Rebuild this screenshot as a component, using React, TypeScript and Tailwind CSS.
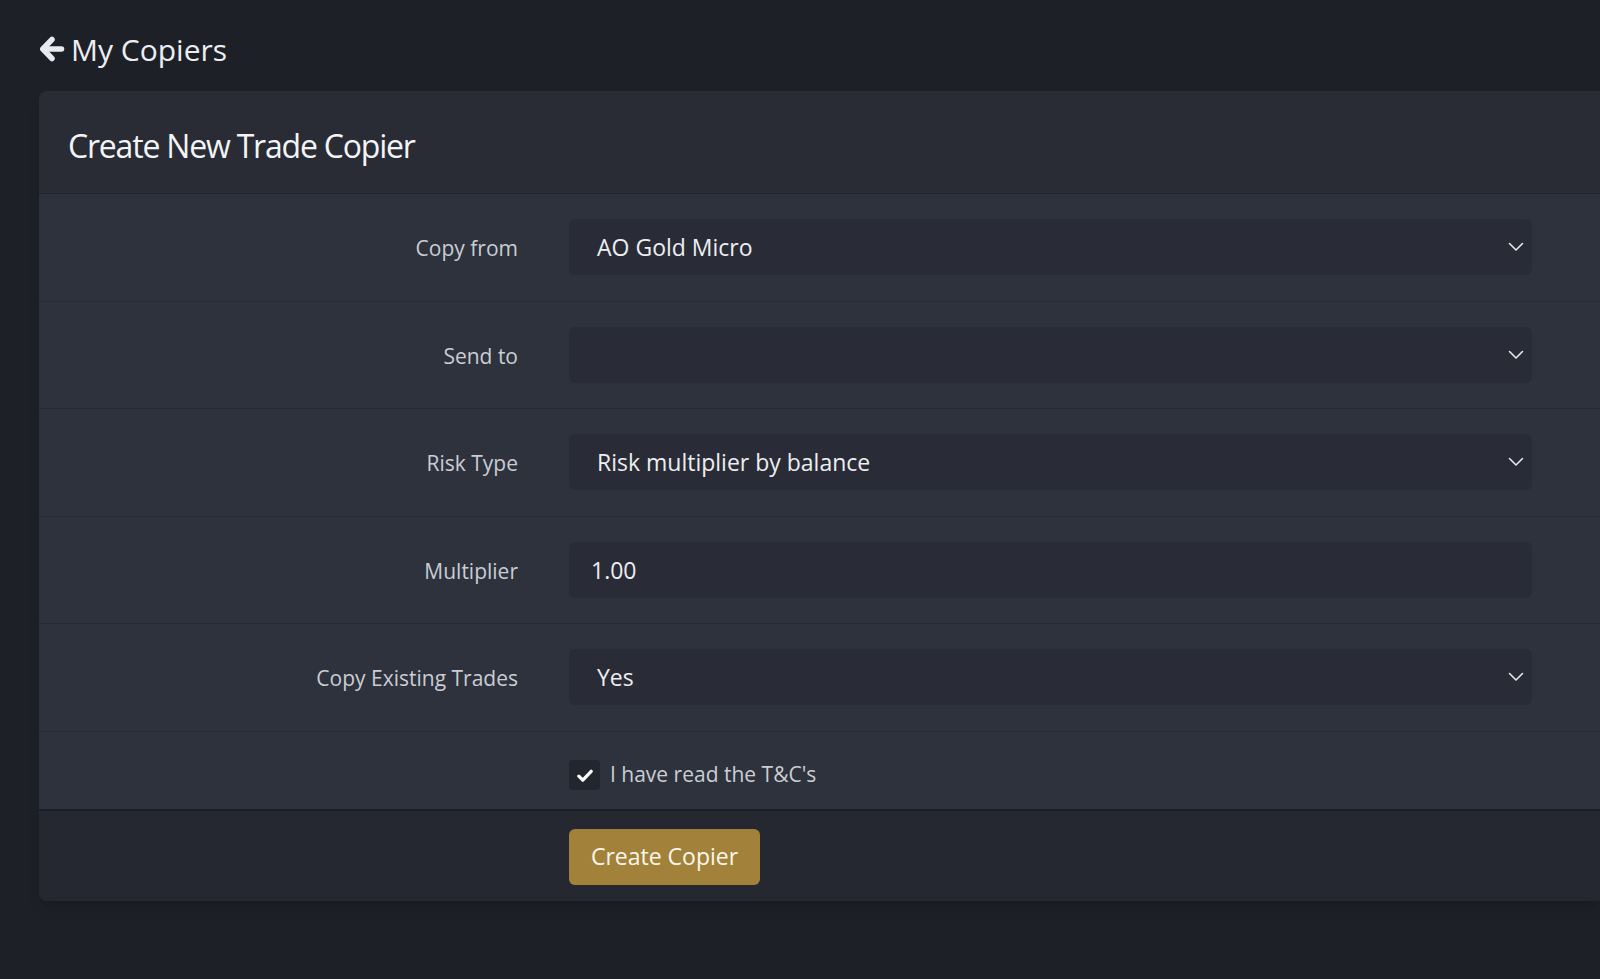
import { useState } from 'react'

interface Field {
  label: string
  value: string
  kind: 'select' | 'input'
}

function ChevronDown() {
  return (
    <svg width="16" height="10" viewBox="0 0 16 10" fill="none">
      <path d="M1.5 1.5L8 8L14.5 1.5" stroke="#e6e8ec" strokeWidth="1.6" strokeLinecap="round" strokeLinejoin="round" />
    </svg>
  )
}

function ArrowLeft() {
  return (
    <svg width="26" height="26" viewBox="0 0 26 26" fill="none">
      <path d="M13 3.5L3.8 13L13 22.5" stroke="#e8eaee" strokeWidth="5.5" strokeLinecap="round" strokeLinejoin="round" />
      <path d="M4.5 13H22.5" stroke="#e8eaee" strokeWidth="5.5" strokeLinecap="round" />
    </svg>
  )
}

function Check() {
  return (
    <svg width="16" height="13" viewBox="0 0 16 13">
      <path d="M1.8 7.2l4 4L14.2 2.3" stroke="#ffffff" strokeWidth="3.2" fill="none" strokeLinecap="round" strokeLinejoin="round" />
    </svg>
  )
}

export default function App() {
  const [agreed, setAgreed] = useState(true)

  const fields: Field[] = [
    { label: 'Copy from', value: 'AO Gold Micro', kind: 'select' },
    { label: 'Send to', value: '', kind: 'select' },
    { label: 'Risk Type', value: 'Risk multiplier by balance', kind: 'select' },
    { label: 'Multiplier', value: '1.00', kind: 'input' },
    { label: 'Copy Existing Trades', value: 'Yes', kind: 'select' },
  ]

  return (
    <div className="min-h-screen bg-[#1e2028] font-['Open_Sans',sans-serif] overflow-hidden">
      {/* Back link */}
      <div className="pt-[29px] pl-[39px]">
        <a className="inline-flex items-center gap-[6px] h-[40px] text-[30px] text-[#eceef2] cursor-pointer">
          <ArrowLeft />
          <span>My Copiers</span>
        </a>
      </div>

      {/* Card */}
      <div className="mt-[22px] ml-[39px] rounded-l-lg overflow-hidden bg-[#292c35] shadow-lg">
        <div className="h-[103px] flex items-center pt-[7px] pl-[29px] border-b border-[#23262d]">
          <h2 className="text-[32px] tracking-[-1.2px] text-[#f3f4f6]">Create New Trade Copier</h2>
        </div>

        {fields.map((f) => (
          <div key={f.label} className="h-[107.5px] flex items-center bg-[#2e323d] border-b border-[#262a32]">
            <label className="w-[479px] pt-[3px] text-right text-[21px] text-[#c9cdd4]">{f.label}</label>
            <div className="ml-[51px] w-[963px] h-[56px] rounded-md bg-[#292c36] flex items-center">
              {f.kind === 'select' ? (
                <>
                  <span className="flex-1 pl-[28px] text-[23px] text-[#eceef1]">{f.value}</span>
                  <span className="pr-[8px] flex items-center">
                    <ChevronDown />
                  </span>
                </>
              ) : (
                <span className="flex-1 pl-[22px] text-[23px] text-[#eceef1]">{f.value}</span>
              )}
            </div>
          </div>
        ))}

        <div className="h-[79px] flex items-center pt-[10px] bg-[#2e323d] border-b-2 border-[#1c1e25]">
          <div className="ml-[530px] flex items-center gap-[10px]">
            <button
              onClick={() => setAgreed(!agreed)}
              className="w-[31px] h-[30px] rounded-[4px] bg-[#23262e] flex items-center justify-center"
            >
              {agreed && <Check />}
            </button>
            <span className="text-[21px] text-[#c9cdd4]">I have read the T&amp;C's</span>
          </div>
        </div>

        <div className="h-[90px] bg-[#252830] pt-[18px]">
          <button className="ml-[530px] w-[191px] h-[56px] rounded-md bg-[#a2823a] text-[23px] text-[#fbf6ec]">
            Create Copier
          </button>
        </div>
      </div>
    </div>
  )
}
